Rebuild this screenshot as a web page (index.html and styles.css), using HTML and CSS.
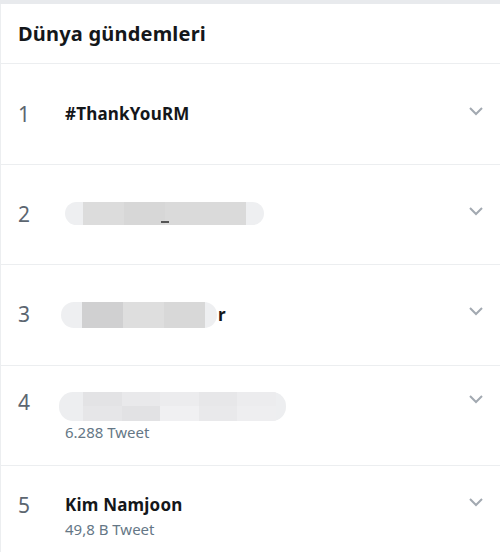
FILE: index.html
```html
<!DOCTYPE html>
<html lang="tr">
<head>
    <meta charset="UTF-8">
    <meta name="viewport" content="width=device-width, initial-scale=1.0">
    <title>Dünya gündemleri</title>
    <link rel="stylesheet" href="styles.css">
</head>
<body>
    <div class="topbar"></div>
    <div class="panel">
        <h2 class="heading">Dünya gündemleri</h2>

        <ul class="trends">
            <li class="trend">
                <div class="row">
                    <span class="rank">1</span>
                    <div class="body">
                        <div class="name">#ThankYouRM</div>
                    </div>
                    <svg class="chev" viewBox="0 0 16 10" width="16" height="10"><path d="M2 2 L8 8 L14 2"/></svg>
                </div>
            </li>
            <li class="trend">
                <div class="row">
                    <span class="rank">2</span>
                    <div class="body">
                        <div class="blur b2">
                            <span class="seg s1"></span><span class="seg s2"></span><span class="seg s3"></span>
                            <span class="dash"></span>
                        </div>
                    </div>
                    <svg class="chev" viewBox="0 0 16 10" width="16" height="10"><path d="M2 2 L8 8 L14 2"/></svg>
                </div>
            </li>
            <li class="trend">
                <div class="row">
                    <span class="rank">3</span>
                    <div class="body">
                        <div class="blur-line">
                            <div class="blur b3">
                                <span class="seg s4"></span><span class="seg s5"></span><span class="seg s6"></span>
                            </div>
                            <span class="tail">r</span>
                        </div>
                    </div>
                    <svg class="chev" viewBox="0 0 16 10" width="16" height="10"><path d="M2 2 L8 8 L14 2"/></svg>
                </div>
            </li>
            <li class="trend">
                <div class="row">
                    <span class="rank">4</span>
                    <div class="body">
                        <div class="blur b4">
                            <div class="grid">
                                <span class="c1"></span><span class="c2"></span><span class="c3"></span><span class="c4"></span><span class="c5"></span>
                                <span class="c6"></span><span class="c7"></span><span class="c8"></span><span class="c9"></span><span class="c10"></span>
                            </div>
                        </div>
                        <div class="count">6.288 Tweet</div>
                    </div>
                    <svg class="chev" viewBox="0 0 16 10" width="16" height="10"><path d="M2 2 L8 8 L14 2"/></svg>
                </div>
            </li>
            <li class="trend">
                <div class="row">
                    <span class="rank">5</span>
                    <div class="body">
                        <div class="name">Kim Namjoon</div>
                        <div class="count">49,8 B Tweet</div>
                    </div>
                    <svg class="chev" viewBox="0 0 16 10" width="16" height="10"><path d="M2 2 L8 8 L14 2"/></svg>
                </div>
            </li>
        </ul>
    </div>
</body>
</html>
```

FILE: styles.css
```css
body {
    margin: 0;
    background: #ffffff;
    font-family: 'Noto Sans', 'DejaVu Sans', sans-serif;
    color: #14171a;
}
.topbar {
    height: 4px;
    background: #e8eaed;
}
.panel {
    border-left: 1px solid #eceef0;
}
.heading {
    margin: 0;
    height: 59px;
    padding-left: 17px;
    display: flex;
    align-items: center;
    font-size: 20px;
    font-weight: 700;
    letter-spacing: 0.2px;
}
.trends {
    list-style: none;
    margin: 0;
    padding: 0;
}
.trend {
    box-sizing: border-box;
    border-top: 1px solid #eceef0;
    min-height: 100.5px;
    display: flex;
    align-items: center;
    padding: 0 16px 0 17px;
}
.row {
    flex: 1;
    display: flex;
    align-items: flex-start;
}
.rank {
    width: 47px;
    font-size: 21px;
    line-height: 26px;
    color: #5c6670;
}
.body {
    flex: 1;
}
.name {
    font-size: 17px;
    font-weight: 700;
    line-height: 26px;
    letter-spacing: 0.2px;
}
.count {
    font-size: 15px;
    line-height: 20px;
    color: #657786;
    margin-top: 1px;
}
.chev {
    margin-top: 5px;
    fill: none;
    stroke: #a2a9b1;
    stroke-width: 2;
}
.blur-line {
    display: flex;
    align-items: center;
}
.blur {
    display: flex;
    position: relative;
    background: #eeeff1;
    border-radius: 13px;
    overflow: hidden;
}
.b2 {
    width: 199px;
    height: 23px;
    padding: 0 18px;
    box-sizing: border-box;
    margin-top: 1px;
}
.b3 {
    width: 156px;
    height: 26px;
    margin-left: -4px;
    padding: 0 12px 0 21px;
    box-sizing: border-box;
    margin-top: 1px;
}
.b4 {
    width: 227px;
    height: 29px;
    margin-left: -6px;
    margin-top: 3px;
    background: #edeef0;
    border-radius: 14px;
    padding: 0 10px 0 24px;
    box-sizing: border-box;
}
.seg {
    height: 100%;
    flex: 1;
}
.s1 { background: #dcdcdc; }
.s2 { background: #d7d7d7; }
.s3 { background: #dadada; flex: 2; }
.s4 { background: #d0d0d1; }
.s5 { background: #dedede; }
.s6 { background: #d8d8d8; }
.dash {
    position: absolute;
    left: 96px;
    bottom: 2px;
    width: 8px;
    height: 2px;
    background: #555;
}
.tail {
    font-size: 17px;
    font-weight: 700;
    line-height: 26px;
    margin-left: 1px;
}
.grid {
    flex: 1;
    display: grid;
    grid-template-columns: repeat(5, 1fr);
}
.grid span { display: block; }
.c1 { background: #e3e3e5; }
.c2 { background: #e9e9eb; }
.c3 { background: #ececee; }
.c4 { background: #e7e7e9; }
.c5 { background: #ececee; }
.c6 { background: #e6e6e8; }
.c7 { background: #e2e2e4; }
.c8 { background: #f0f0f2; }
.c9 { background: #e9e9eb; }
.c10 { background: #eeeef0; }
```
